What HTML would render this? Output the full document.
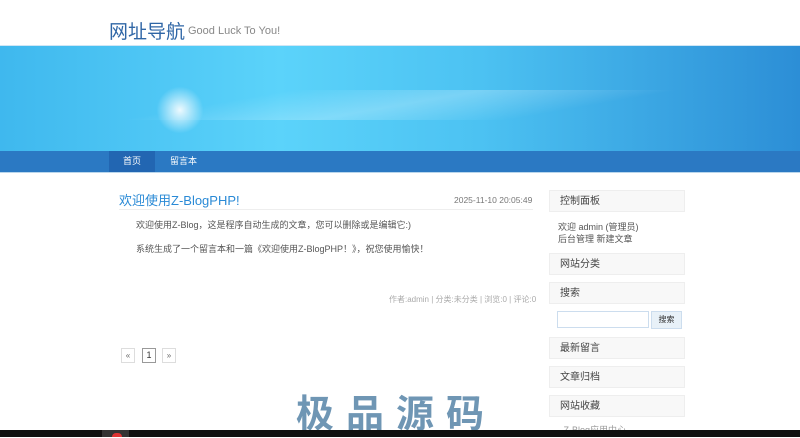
<!DOCTYPE html>
<html><head><meta charset="utf-8"><style>
body{margin:0;width:800px;height:437px;overflow:hidden;background:#fff;font-family:"Liberation Sans","Noto Sans CJK SC",sans-serif;position:relative}
.a{position:absolute}
.t{font-size:9px;color:#555}
.box{position:absolute;left:549px;width:134px;height:20px;border:1px solid #eee;background:#f8f8f8;font-size:10px;color:#444;line-height:22px;text-indent:10px}
.pg{position:absolute;top:348px;width:12px;height:13px;border:1px solid #ddd;font-size:8px;color:#666;text-align:center;line-height:13px}
</style></head><body>
<div class="a" style="left:109px;top:17px;font-size:19px;color:#2f66a6">网址导航</div>
<div class="a" style="left:188px;top:25px;font-size:11px;color:#888">Good Luck To You!</div>
<div class="a" style="left:0;top:45px;width:800px;height:1px;background:#cfe6f5"></div>
<div class="a" style="left:0;top:46px;width:800px;height:105px;background:linear-gradient(90deg,#3fb8ee 0%,#5bd3fa 35%,#4cc2f2 60%,#2c8ed6 100%)"></div>
<div class="a" style="left:0;top:90px;width:800px;height:30px;background:linear-gradient(170deg,transparent 30%,rgba(255,255,255,.25) 50%,transparent 70%)"></div>
<div class="a" style="left:150px;top:85px;width:60px;height:50px;background:radial-gradient(circle,rgba(255,255,255,.9) 0,rgba(255,255,255,0) 60%)"></div>
<div class="a" style="left:0;top:151px;width:800px;height:21px;background:#2b79c3"></div>
<div class="a" style="left:109px;top:151px;width:46px;height:21px;background:#2266b2;color:#fff;font-size:9px;line-height:21px;text-align:center">首页</div>
<div class="a" style="left:170px;top:151px;color:#fff;font-size:9px;line-height:21px">留言本</div>
<div class="a" style="left:0;top:172px;width:800px;height:1px;background:#b9d6ec"></div>
<div class="a" style="left:119px;top:190px;font-size:13px;color:#2a8ad6">欢迎使用Z-BlogPHP!</div>
<div class="a" style="left:454px;top:195px;font-size:8.5px;color:#777">2025-11-10 20:05:49</div>
<div class="a" style="left:119px;top:209px;width:414px;height:1px;background:#eee"></div>
<div class="a t" style="left:136px;top:218px">欢迎使用Z-Blog，这是程序自动生成的文章，您可以删除或是编辑它:)</div>
<div class="a t" style="left:136px;top:242px">系统生成了一个留言本和一篇《欢迎使用Z-BlogPHP！》，祝您使用愉快！</div>
<div class="a" style="left:389px;top:294px;font-size:8px;color:#aaa">作者:admin | 分类:未分类 | 浏览:0 | 评论:0</div>
<div class="pg" style="left:121px">«</div>
<div class="pg" style="left:142px;border-color:#999;font-size:9px;color:#333">1</div>
<div class="pg" style="left:162px">»</div>
<div class="box" style="top:190px">控制面板</div>
<div class="a t" style="left:558px;top:220px">欢迎 admin (管理员)</div>
<div class="a t" style="left:558px;top:232px">后台管理 新建文章</div>
<div class="box" style="top:253px">网站分类</div>
<div class="box" style="top:282px">搜索</div>
<div class="a" style="left:557px;top:311px;width:90px;height:15px;border:1px solid #cde"></div>
<div class="a" style="left:651px;top:311px;width:29px;height:16px;background:#e8f1f8;border:1px solid #cde;font-size:8px;text-align:center;line-height:16px;color:#333">搜索</div>
<div class="box" style="top:337px">最新留言</div>
<div class="box" style="top:366px">文章归档</div>
<div class="box" style="top:395px">网站收藏</div>
<div class="a t" style="left:558px;top:423px;color:#999">· Z-Blog应用中心</div>
<div class="a" style="left:296px;top:388px;font-size:38px;font-weight:bold;color:#6f96b4;letter-spacing:12px;font-family:'Noto Sans CJK SC',sans-serif;line-height:46px">极品源码</div>
<div class="a" style="left:0;top:430px;width:800px;height:7px;background:#111"></div>
<div class="a" style="left:102px;top:430px;width:27px;height:7px;background:#333"></div>
<div class="a" style="left:112px;top:433px;width:10px;height:4px;border-radius:5px 5px 0 0;background:#d33"></div>
</body></html>
